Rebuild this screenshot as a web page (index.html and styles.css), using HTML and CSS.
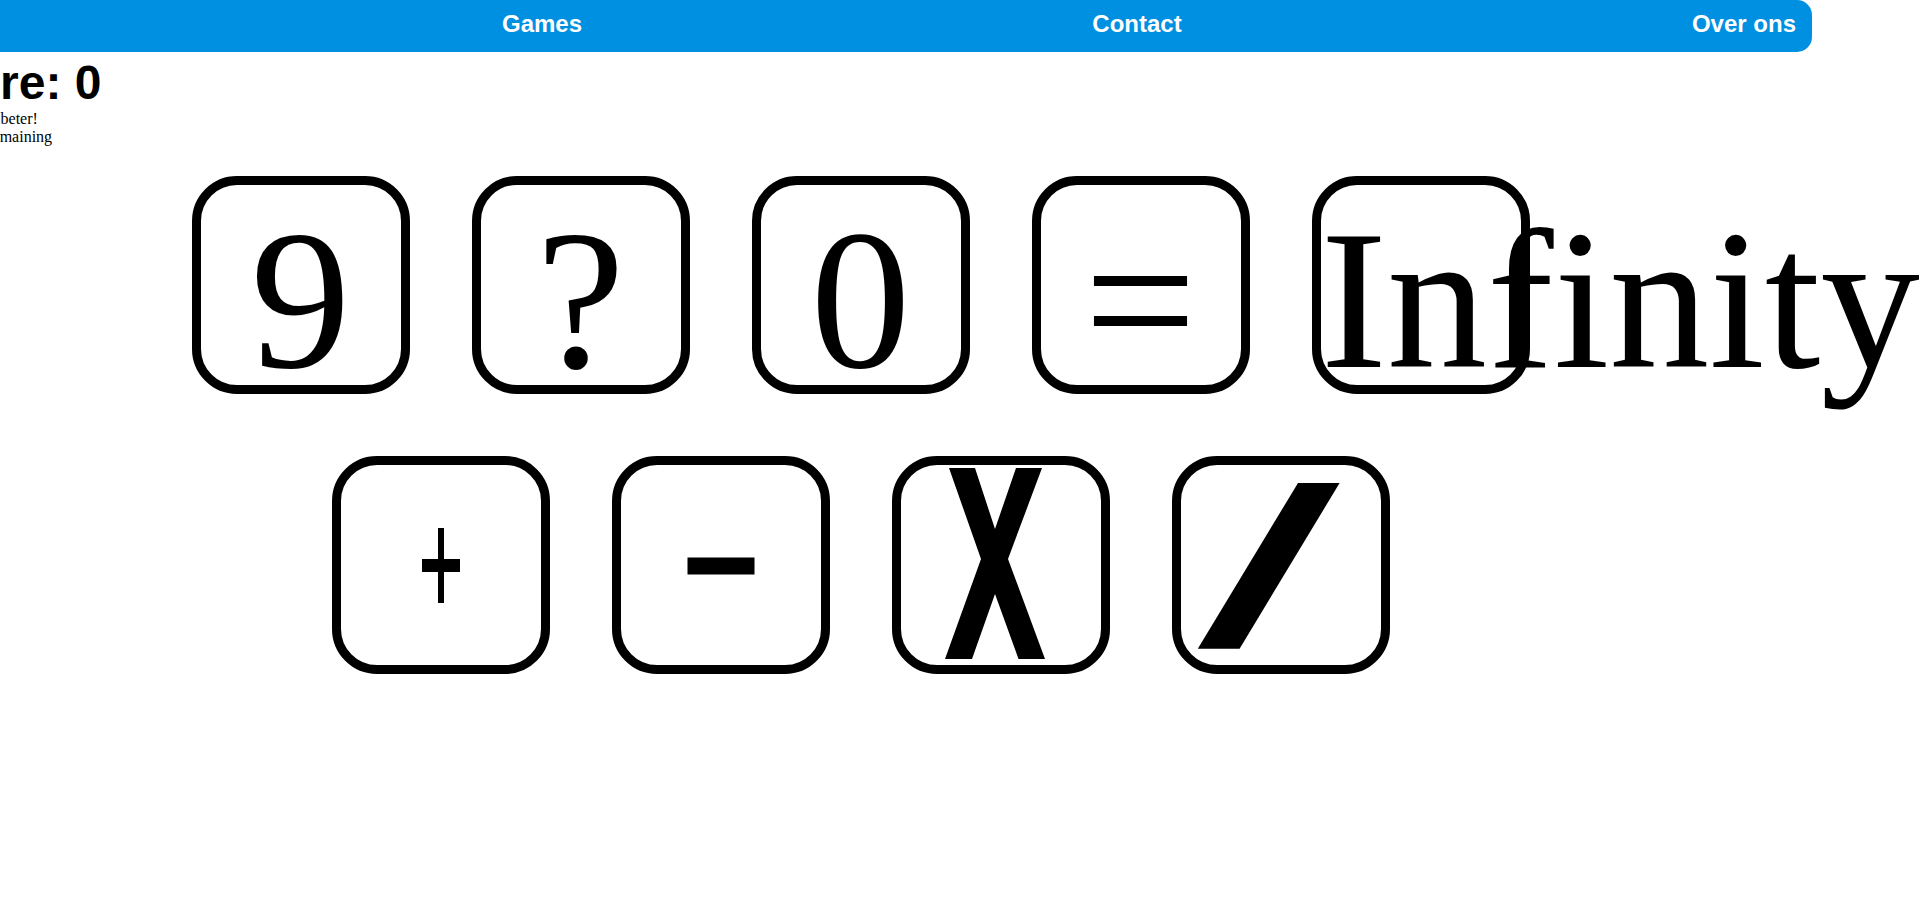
FILE: index.html
```html
<!DOCTYPE html>
<html lang="nl">
<head>
<meta charset="utf-8">
<title>Rekenspel</title>
<link rel="stylesheet" href="styles.css">
</head>
<body>
<div class="page">
  <nav class="nav">
    <a class="nav-link" href="#">Home</a>
    <a class="nav-link" href="#">Games</a>
    <a class="nav-link" href="#">Contact</a>
    <a class="nav-link" href="#">Over ons</a>
  </nav>
  <h1 class="score">Score: 0</h1>
  <p class="info">Oeps, dat kan beter!<br>10 attempts remaining</p>
  <div class="board">
    <div class="row">
      <div class="tile">9</div>
      <div class="tile">?</div>
      <div class="tile">0</div>
      <div class="tile">=</div>
      <div class="tile">Infinity</div>
    </div>
    <div class="row">
      <div class="tile" title="+">
        <svg class="op" viewBox="0 0 200 200" width="200" height="200">
          <rect x="81" y="94" width="38" height="13"/>
          <rect x="97" y="63" width="6" height="75"/>
        </svg>
      </div>
      <div class="tile" title="-">
        <svg class="op" viewBox="0 0 200 200" width="200" height="200">
          <rect x="66.5" y="92.5" width="67" height="17"/>
        </svg>
      </div>
      <div class="tile" title="x">
        <svg class="op" viewBox="0 0 200 200" width="200" height="200">
          <polygon points="48,3 74,3 94,64 115,3 141,3 107,94 144,194 117.5,194 94,129 71,194 44,194 80,94"/>
        </svg>
      </div>
      <div class="tile" title="/">
        <svg class="op" viewBox="0 0 200 200" width="200" height="200">
          <polygon points="117,18 158.6,18 58.6,183.7 16.8,183.7"/>
        </svg>
      </div>
    </div>
  </div>
</div>
</body>
</html>
```
FILE: styles.css
```css
html, body {
  margin: 0;
  overflow: hidden;
  background: #fff;
}

body {
  font-family: "Liberation Serif", "Times New Roman", serif;
  color: #000;
}

.page {
  margin-left: -99px;
  width: 1903px;
  padding: 0 8px;
}

.nav {
  display: flex;
  justify-content: space-between;
  background: #0090e2;
  border-radius: 15px;
  padding: 10px 16px 14px;
}

.nav-link {
  font-family: "Liberation Sans", Arial, sans-serif;
  font-weight: 700;
  font-size: 24px;
  color: #fff;
  text-decoration: none;
}

.score {
  margin: 3px 0 0;
  padding-left: 3px;
  font-family: "Liberation Sans", Arial, sans-serif;
  font-weight: 700;
  font-size: 48px;
}

.info {
  margin: 0;
  font-size: 16px;
}

.board {
  margin-top: -1px;
}

.row {
  display: flex;
  justify-content: center;
}

.tile {
  flex: none;
  width: 200px;
  height: 200px;
  margin: 31px;
  border: 9px solid #000;
  border-radius: 45px;
  text-align: center;
  font-family: "Liberation Serif", "Times New Roman", serif;
  font-size: 200px;
  white-space: nowrap;
}

.op {
  display: block;
  fill: #000;
}
```
